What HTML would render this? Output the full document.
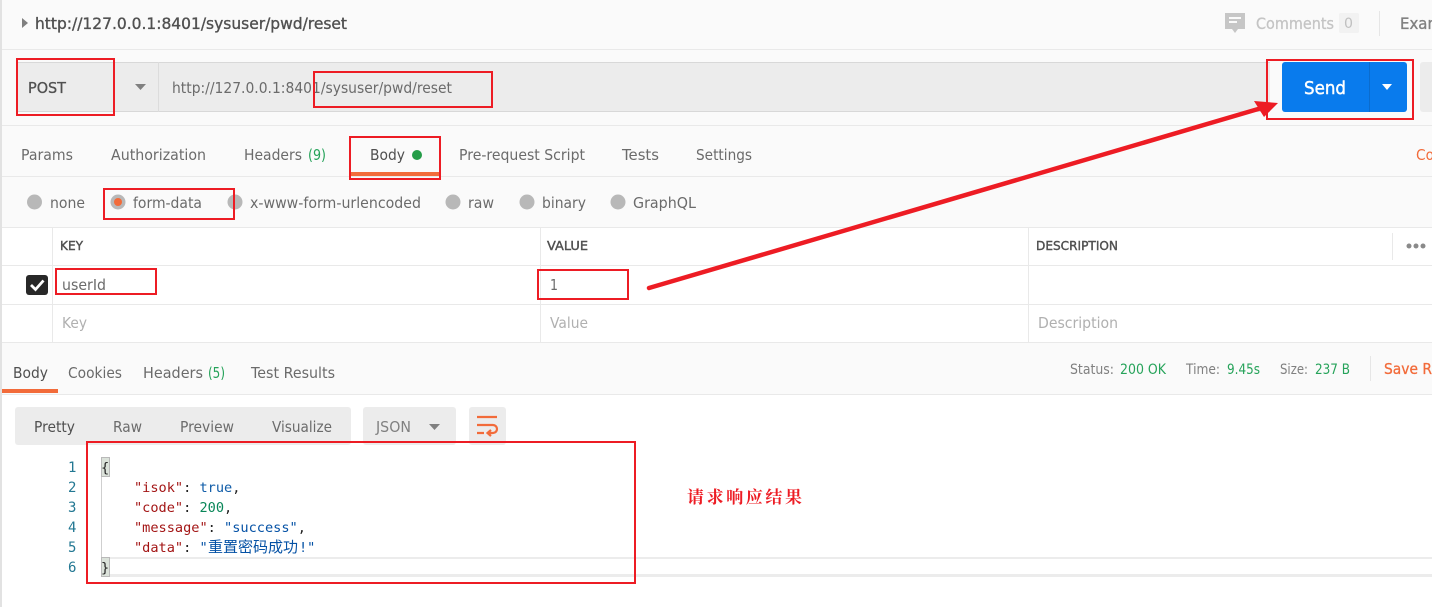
<!DOCTYPE html>
<html><head><meta charset="utf-8"><title>Postman</title>
<style>
html,body{margin:0;padding:0;background:#fff;width:1432px;height:607px;overflow:hidden}
svg{display:block}
text{font-family:"DejaVu Sans","Liberation Sans",sans-serif;font-size:15px;fill:#6b6b6b}
.s{font-size:16px;fill:#505050;stroke:#505050;stroke-width:.35px}
.h{font-size:12px;font-weight:normal;fill:#505050;stroke:#505050;stroke-width:.4px}
.ph{fill:#b0b0b0}
.g{fill:#26a35a}
.st{font-size:14px}
.m{font-family:"DejaVu Sans Mono","Liberation Mono",monospace;font-size:13.6px;fill:#222}
.n{font-family:"DejaVu Sans Mono","Liberation Mono",monospace;font-size:14px;fill:#237893}
.k{fill:#a31515}.v{fill:#0451a5}.t{fill:#0f5ca8}.d{fill:#098658}
.r{fill:none;stroke:#ed1c24;stroke-width:2}
</style></head><body>
<svg width="1432" height="607" viewBox="0 0 1432 607" xmlns="http://www.w3.org/2000/svg">
<rect width="1432" height="607" fill="#fff"/>
<rect x="0" y="0" width="1432" height="227" fill="#fafafa"/>
<rect x="0" y="343" width="1432" height="51" fill="#fafafa"/>
<rect x="0" y="0" width="2" height="607" fill="#e2e2e2"/>

<!-- top bar -->
<path d="M22 18l6 5-6 5z" fill="#808080"/>
<text x="35" y="29" class="s" textLength="312" lengthAdjust="spacingAndGlyphs">http://127.0.0.1:8401/sysuser/pwd/reset</text>
<path d="M1225 13h20v16h-7l-3 4-3-4h-7z" fill="#c6c6c6"/>
<rect x="1229" y="17" width="12" height="2" fill="#fafafa"/><rect x="1229" y="21" width="8" height="2" fill="#fafafa"/>
<text x="1256" y="29" style="font-size:16px;fill:#c4c4c4;stroke:#c4c4c4;stroke-width:.3px" textLength="78" lengthAdjust="spacingAndGlyphs">Comments</text>
<rect x="1339" y="13" width="20" height="20" rx="2" fill="#f2f2f2"/>
<text x="1344" y="28" style="font-size:14px;fill:#c0c0c0" textLength="9" lengthAdjust="spacingAndGlyphs">0</text>
<rect x="1379" y="11" width="1" height="25" fill="#e6e6e6"/>
<text x="1400" y="29" style="font-size:16px;fill:#808080;stroke:#808080;stroke-width:.35px" textLength="42" lengthAdjust="spacingAndGlyphs">Exam</text>
<rect x="2" y="49" width="1430" height="1" fill="#e9e9e9"/>

<!-- url row -->
<rect x="16" y="62" width="1254" height="50" fill="#ececec"/>
<rect x="16" y="62" width="1254" height="1" fill="#d8d8d8"/><rect x="16" y="111" width="1254" height="1" fill="#d8d8d8"/>
<rect x="158" y="62" width="1" height="50" fill="#dcdcdc"/>
<text x="28" y="93" style="font-size:15px;fill:#505050;stroke:#505050;stroke-width:.3px" textLength="38" lengthAdjust="spacingAndGlyphs">POST</text>
<path d="M135 84h11l-5.500 6z" fill="#808080"/>
<text x="172" y="93" textLength="280" lengthAdjust="spacingAndGlyphs">http://127.0.0.1:8401/sysuser/pwd/reset</text>
<rect x="1282" y="62" width="125" height="50" rx="3" fill="#097bed"/>
<rect x="1369" y="62" width="1" height="50" fill="#0a6cce"/>
<text x="1304" y="94" style="font-size:18px;fill:#fff;stroke:#fff;stroke-width:.45px" textLength="42" lengthAdjust="spacingAndGlyphs">Send</text>
<path d="M1382 84h10l-5 6z" fill="#fff"/>
<path d="M1420 65a3 3 0 0 1 3-3h9v50h-9a3 3 0 0 1-3-3z" fill="#ececec"/>
<rect x="2" y="125" width="1430" height="1" fill="#e9e9e9"/>

<!-- tabs -->
<text x="21" y="160" textLength="52" lengthAdjust="spacingAndGlyphs">Params</text>
<text x="111" y="160" textLength="95" lengthAdjust="spacingAndGlyphs">Authorization</text>
<text x="244" y="160" textLength="58" lengthAdjust="spacingAndGlyphs">Headers</text>
<text x="308" y="160" class="g" textLength="18" lengthAdjust="spacingAndGlyphs">(9)</text>
<text x="370" y="160" style="fill:#505050" textLength="35" lengthAdjust="spacingAndGlyphs">Body</text>
<circle cx="417" cy="155" r="5" fill="#249c47"/>
<text x="459" y="160" textLength="126" lengthAdjust="spacingAndGlyphs">Pre-request Script</text>
<text x="622" y="160" textLength="37" lengthAdjust="spacingAndGlyphs">Tests</text>
<text x="696" y="160" textLength="56" lengthAdjust="spacingAndGlyphs">Settings</text>
<text x="1416" y="160" style="fill:#f26b3a" textLength="18" lengthAdjust="spacingAndGlyphs">Co</text>
<rect x="351" y="172" width="88" height="4" fill="#f26b3a"/>
<rect x="2" y="176" width="1430" height="1" fill="#e9e9e9"/>

<!-- radios -->
<circle cx="34.500" cy="202" r="7.500" fill="#b8b8b8"/>
<text x="50" y="208" textLength="35" lengthAdjust="spacingAndGlyphs">none</text>
<circle cx="118" cy="202" r="7.500" fill="#b8b8b8"/><circle cx="118" cy="202" r="4" fill="#f26b3a"/>
<text x="133" y="208" textLength="69" lengthAdjust="spacingAndGlyphs">form-data</text>
<circle cx="235" cy="202" r="7.500" fill="#b8b8b8"/>
<text x="250" y="208" textLength="171" lengthAdjust="spacingAndGlyphs">x-www-form-urlencoded</text>
<circle cx="453" cy="202" r="7.500" fill="#b8b8b8"/>
<text x="468" y="208" textLength="26" lengthAdjust="spacingAndGlyphs">raw</text>
<circle cx="527" cy="202" r="7.500" fill="#b8b8b8"/>
<text x="542" y="208" textLength="44" lengthAdjust="spacingAndGlyphs">binary</text>
<circle cx="618" cy="202" r="7.500" fill="#b8b8b8"/>
<text x="633" y="208" textLength="63" lengthAdjust="spacingAndGlyphs">GraphQL</text>

<!-- table -->
<g fill="#e9e9e9">
<rect x="2" y="227" width="1430" height="1"/>
<rect x="2" y="265" width="1430" height="1"/>
<rect x="2" y="304" width="1430" height="1"/>
<rect x="2" y="342" width="1430" height="1"/>
<rect x="52" y="227" width="1" height="116"/>
<rect x="540" y="227" width="1" height="116"/>
<rect x="1028" y="227" width="1" height="116"/>
<rect x="1392" y="233" width="1" height="27"/>
</g>
<text x="60" y="250" class="h" textLength="23" lengthAdjust="spacingAndGlyphs">KEY</text>
<text x="547" y="250" class="h" textLength="41" lengthAdjust="spacingAndGlyphs">VALUE</text>
<text x="1036" y="250" class="h" textLength="82" lengthAdjust="spacingAndGlyphs">DESCRIPTION</text>
<circle cx="1409" cy="246" r="2.500" fill="#8a8a8a"/><circle cx="1416" cy="246" r="2.500" fill="#8a8a8a"/><circle cx="1423" cy="246" r="2.500" fill="#8a8a8a"/>
<rect x="26" y="275" width="22" height="20" rx="3" fill="#282828"/>
<path d="M31 285l4.500 4.500 8-9" fill="none" stroke="#fff" stroke-width="2.800"/>
<text x="62" y="290" textLength="44" lengthAdjust="spacingAndGlyphs">userId</text>
<text x="550" y="290" textLength="8" lengthAdjust="spacingAndGlyphs">1</text>
<text x="62" y="328" class="ph" textLength="25" lengthAdjust="spacingAndGlyphs">Key</text>
<text x="550" y="328" class="ph" textLength="38" lengthAdjust="spacingAndGlyphs">Value</text>
<text x="1038" y="328" class="ph" textLength="80" lengthAdjust="spacingAndGlyphs">Description</text>

<!-- response tabs -->
<text x="13" y="378" style="fill:#505050" textLength="35" lengthAdjust="spacingAndGlyphs">Body</text>
<text x="68" y="378" textLength="54" lengthAdjust="spacingAndGlyphs">Cookies</text>
<text x="143" y="378" textLength="60" lengthAdjust="spacingAndGlyphs">Headers</text>
<text x="208" y="378" class="g" textLength="17" lengthAdjust="spacingAndGlyphs">(5)</text>
<text x="251" y="378" textLength="84" lengthAdjust="spacingAndGlyphs">Test Results</text>
<rect x="2" y="389" width="56" height="4" fill="#f26b3a"/>
<rect x="2" y="394" width="1430" height="1" fill="#e9e9e9"/>
<text x="1070" y="374" class="st" style="fill:#808080" textLength="44" lengthAdjust="spacingAndGlyphs">Status:</text>
<text x="1120" y="374" class="g st" textLength="46" lengthAdjust="spacingAndGlyphs">200 OK</text>
<text x="1186" y="374" class="st" style="fill:#808080" textLength="34" lengthAdjust="spacingAndGlyphs">Time:</text>
<text x="1227" y="374" class="g st" textLength="33" lengthAdjust="spacingAndGlyphs">9.45s</text>
<text x="1280" y="374" class="st" style="fill:#808080" textLength="28" lengthAdjust="spacingAndGlyphs">Size:</text>
<text x="1315" y="374" class="g st" textLength="35" lengthAdjust="spacingAndGlyphs">237 B</text>
<rect x="1370" y="356" width="1" height="25" fill="#e6e6e6"/>
<text x="1384" y="374" style="font-size:15px;fill:#f26b3a;stroke:#f26b3a;stroke-width:.3px" textLength="48" lengthAdjust="spacingAndGlyphs">Save R</text>

<!-- view toolbar -->
<rect x="15" y="407" width="336" height="38" rx="3" fill="#ececec"/>
<text x="34" y="432" style="fill:#505050" textLength="41" lengthAdjust="spacingAndGlyphs">Pretty</text>
<text x="113" y="432" textLength="29" lengthAdjust="spacingAndGlyphs">Raw</text>
<text x="180" y="432" textLength="54" lengthAdjust="spacingAndGlyphs">Preview</text>
<text x="272" y="432" textLength="60" lengthAdjust="spacingAndGlyphs">Visualize</text>
<rect x="363" y="407" width="93" height="38" rx="3" fill="#ececec"/>
<text x="376" y="432" style="fill:#808080" textLength="35" lengthAdjust="spacingAndGlyphs">JSON</text>
<path d="M429 424h11l-5.500 6z" fill="#808080"/>
<rect x="469" y="407" width="37" height="38" rx="3" fill="#ececec"/>
<path d="M477 417h20M477 425h16a3.500 3.500 0 0 1 0 8h-5M477 433h7M491 430l-3.500 3 3.500 3" fill="none" stroke="#f26b3a" stroke-width="2.200"/>

<!-- editor -->
<rect x="102" y="557" width="1330" height="2" fill="#ececec"/>
<rect x="102" y="574" width="1330" height="3" fill="#ececec"/>
<rect x="101" y="476" width="1" height="81" fill="#cfcfcf"/>
<rect x="101.500" y="457.500" width="8" height="19" fill="#dbe2da" stroke="#b9b9b9"/>
<rect x="101.500" y="557.500" width="8" height="19" fill="#dbe2da" stroke="#b9b9b9"/>
<text x="68" y="472" class="n">1</text>
<text x="68" y="492" class="n">2</text>
<text x="68" y="512" class="n">3</text>
<text x="68" y="532" class="n">4</text>
<text x="68" y="552" class="n">5</text>
<text x="68" y="572" class="n">6</text>
<text x="101" y="472" class="m">{</text>
<text x="134" y="492" class="m"><tspan class="k">"isok"</tspan>: <tspan class="t">true</tspan>,</text>
<text x="134" y="512" class="m"><tspan class="k">"code"</tspan>: <tspan class="d">200</tspan>,</text>
<text x="134" y="532" class="m"><tspan class="k">"message"</tspan>: <tspan class="v">"success"</tspan>,</text>
<text x="134" y="552" class="m"><tspan class="k">"data"</tspan>: <tspan class="v">"</tspan></text>
<text x="208" y="552" style="font-family:'Liberation Sans','Noto Sans CJK SC',sans-serif;font-size:15px;fill:#0451a5" textLength="90" lengthAdjust="spacingAndGlyphs">重置密码成功</text>
<text x="299" y="552" class="m v">!"</text>
<text x="101" y="572" class="m">}</text>

<!-- annotation -->
<text x="687" y="503" style="font-family:'Liberation Serif','Noto Serif CJK SC',serif;font-size:17px;font-weight:bold;fill:#ed1c24" textLength="115">请求响应结果</text>

<!-- red annotations -->
<rect class="r" x="17" y="59" width="97" height="56"/>
<rect class="r" x="314" y="72" width="178" height="35"/>
<rect class="r" x="350" y="137" width="90" height="42"/>
<rect class="r" x="104" y="189" width="130" height="30"/>
<rect class="r" x="1267" y="60" width="146" height="59"/>
<rect class="r" x="56" y="269" width="100" height="25"/>
<rect class="r" x="538" y="270" width="90" height="29"/>
<rect class="r" x="87" y="442" width="548" height="141"/>
<path d="M649 288L1265 107" fill="none" stroke="#ed1c24" stroke-width="4.500" stroke-linecap="round"/>
<path d="M1278 103L1254 101L1264 117z" fill="#ed1c24"/>
</svg>
</body></html>
